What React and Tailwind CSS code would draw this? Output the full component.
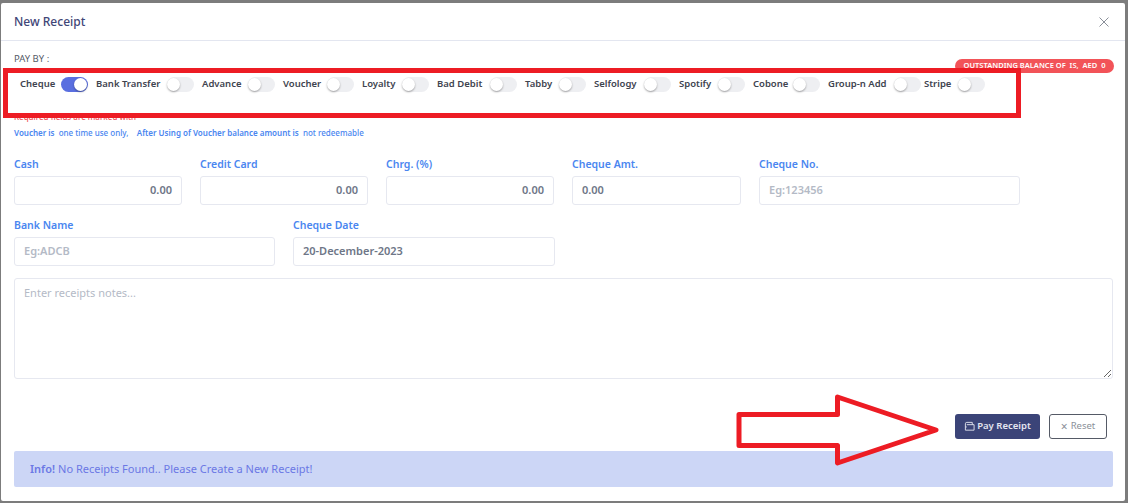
// New Receipt modal, with the red review annotations drawn on top
const font = { fontFamily: '"Noto Sans", sans-serif' };

const payOptions = [
  { label: "Cheque", width: "w-[35px]", on: true },
  { label: "Bank Transfer", width: "w-[65px]" },
  { label: "Advance", width: "w-[40px]" },
  { label: "Voucher", width: "w-[38px]" },
  { label: "Loyalty", width: "w-[34px]" },
  { label: "Bad Debit", width: "w-[47px]" },
  { label: "Tabby", width: "w-[28px]" },
  { label: "Selfology", width: "w-[44px]" },
  { label: "Spotify", width: "w-[33px]" },
  { label: "Cobone", width: "w-[34px]" },
  { label: "Group-n Add", width: "w-[60px]" },
  { label: "Stripe", width: "w-[28px]", last: true },
];

function Toggle({ on }) {
  return (
    <span
      className={`flex h-[15px] w-[27px] shrink-0 items-center rounded-full ${
        on ? "justify-end bg-[#5a6fe0] pr-[1px]" : "bg-[#eeeff2]"
      }`}
    >
      <span className="h-[13px] w-[13px] rounded-full bg-white shadow-[0_1px_2px_rgba(0,0,0,0.35)]" />
    </span>
  );
}

function Field({ label, value, placeholder, right, width }) {
  return (
    <div className={`flex shrink-0 flex-col ${width}`}>
      <label className="h-[19px] text-[10.5px] leading-[14px] font-semibold text-[#4a86f0]">{label}</label>
      <div
        className={`flex h-[29px] items-center rounded-[3px] border border-[#e6e8f0] px-[9px] text-[11px] font-semibold ${
          right ? "justify-end" : ""
        } ${value ? "text-[#6e7687]" : "font-normal text-[#b4bac6]"}`}
      >
        {value || placeholder}
      </div>
    </div>
  );
}

export default function App() {
  return (
    <div className="relative h-[503px] w-full overflow-hidden bg-[#7c7c7c] pt-[3px] pl-[1px]" style={font}>
      <div className="h-[498px] w-[1124px] rounded-[2px] bg-white">
        {/* ── Header ── */}
        <div className="flex h-[38px] items-center justify-between border-b border-[#e3e6f0] pr-[16px] pl-[13px]">
          <h5 className="text-[12px] font-medium text-[#3f4677]">New Receipt</h5>
          <svg width="10" height="10" viewBox="0 0 10 10" stroke="#8a8f99" strokeWidth="1">
            <path d="M0.5 0.5 L9.5 9.5 M9.5 0.5 L0.5 9.5" />
          </svg>
        </div>

        <div className="relative pr-[12px] pl-[13px]">
          <p className="pt-[11px] text-[9.5px] leading-[13px] text-[#555a66]">PAY BY :</p>

          <span className="absolute top-[18px] right-[11px] flex h-[14px] w-[159px] items-center justify-center rounded-full bg-[#f25358] text-[7.5px] font-semibold whitespace-pre text-white">
            OUTSTANDING BALANCE OF  IS,  AED  0
          </span>

          {/* ── Pay options ── */}
          <div className="mt-[12px] flex h-[15px] items-center pl-[6px]">
            {payOptions.map((opt) => (
              <div key={opt.label} className="flex items-center">
                <span className={`mr-[6px] text-[9.5px] font-semibold whitespace-nowrap text-[#40444f] ${opt.width}`}>
                  {opt.label}
                </span>
                <Toggle on={opt.on} />
                <span className={opt.label === "Group-n Add" ? "w-[3px]" : "w-[8px]"} />
              </div>
            ))}
          </div>

          <p className="mt-[19px] text-[8px] leading-[11px] font-medium text-[#f25358]">Required fields are marked with *</p>
          <p className="mt-[5px] text-[8px] leading-[11px] font-medium whitespace-pre text-[#4a86f0]">
            <span className="font-semibold">Voucher is</span>  one time use only,    <span className="font-semibold">After Using of Voucher balance amount is</span>  not redeemable
          </p>

          {/* ── Form ── */}
          <div className="mt-[19px] flex gap-[18px]">
            <Field label="Cash" value="0.00" right width="w-[168px]" />
            <Field label="Credit Card" value="0.00" right width="w-[168px]" />
            <Field label="Chrg. (%)" value="0.00" right width="w-[168px]" />
            <Field label="Cheque Amt." value="0.00" width="w-[169px]" />
            <Field label="Cheque No." placeholder="Eg:123456" width="w-[261px]" />
          </div>
          <div className="mt-[13px] flex gap-[18px]">
            <Field label="Bank Name" placeholder="Eg:ADCB" width="w-[261px]" />
            <Field label="Cheque Date" value="20-December-2023" width="w-[262px]" />
          </div>
          <textarea
            placeholder="Enter receipts notes..."
            className="mt-[12px] block h-[101px] w-[1099px] rounded-[3px] border border-[#e6e8f0] px-[9px] py-[6px] text-[11px] outline-none placeholder:text-[#b4bac6]"
          />

          {/* ── Actions ── */}
          <div className="mt-[35px] flex justify-end gap-[9px] pr-[6px]">
            <button className="flex h-[25px] w-[85px] items-center justify-center gap-[2px] rounded-[3px] bg-[#3b4478] text-[9.5px] font-semibold text-[#e4e6f0]">
              <svg width="11" height="11" viewBox="0 0 24 24" fill="none" stroke="currentColor" strokeWidth="2">
                <path d="M3 6 V20 H22 V8 H6 M3 6 Q3 3 6 3 H18 V8 M3 13 H6" />
              </svg>
              Pay Receipt
            </button>
            <button className="flex h-[25px] w-[58px] items-center justify-center gap-[3px] rounded-[3px] border border-[#555a66] text-[9.5px] text-[#8a8f99]">
              <span className="text-[12px] leading-none">×</span> Reset
            </button>
          </div>

          <div className="mt-[12px] flex h-[36px] w-[1099px] items-center rounded-[2px] bg-[#ccd6f6] px-[16px] text-[11px] text-[#6b78e5]">
            <span className="mr-[3px] font-semibold">Info!</span> No Receipts Found.. Please Create a New Receipt!
          </div>
        </div>
      </div>

      {/* ── Red annotations over the modal ── */}
      <div className="absolute top-[68px] left-[3px] h-[50px] w-[1018px] border-[5px] border-[#ed1c24]" />
      <svg className="absolute top-[390px] left-[732px]" width="212" height="80" viewBox="0 0 212 80" fill="none">
        <path
          d="M7 24.5 H105.5 V7 L204 40 L105.5 73 V55.5 H7 Z"
          stroke="#ed1c24"
          strokeWidth="5"
          strokeLinejoin="round"
        />
      </svg>
    </div>
  );
}
